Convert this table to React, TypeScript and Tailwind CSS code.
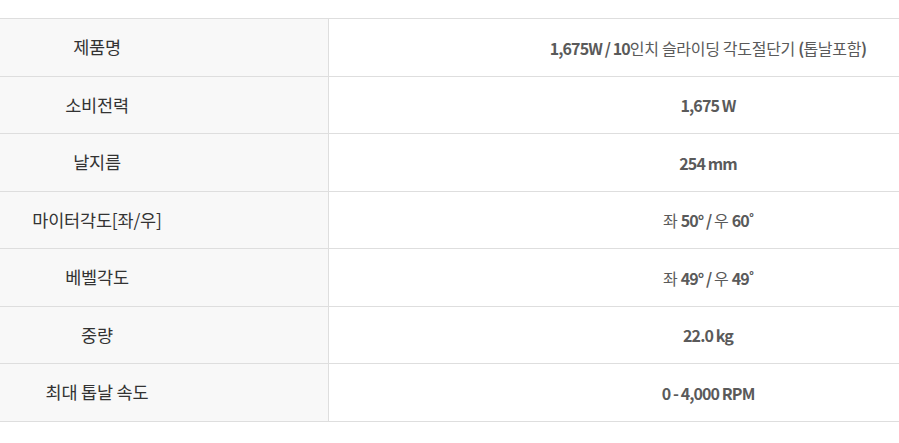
import React from "react";

const B = ({ children }: { children: React.ReactNode }) => (
  <span className="font-semibold tracking-[-0.9px]">{children}</span>
);

const rows: { k: string; v: React.ReactNode }[] = [
  {
    k: "제품명",
    v: (
      <>
        <B>1,675W / 10</B>인치 슬라이딩 각도절단기 <B>(</B>톱날포함<B>)</B>
      </>
    ),
  },
  { k: "소비전력", v: <B>1,675 W</B> },
  { k: "날지름", v: <B>254 mm</B> },
  {
    k: "마이터각도[좌/우]",
    v: (
      <>
        좌 <B>50° / </B>우 <B>60˚</B>
      </>
    ),
  },
  {
    k: "베벨각도",
    v: (
      <>
        좌 <B>49° / </B>우 <B>49˚</B>
      </>
    ),
  },
  { k: "중량", v: <B>22.0 kg</B> },
  { k: "최대 톱날 속도", v: <B>0 - 4,000 RPM</B> },
];

export default function App() {
  return (
    <div
      className="w-[899px] h-[443px] bg-white pt-[18px]"
      style={{ fontFamily: '"Noto Sans CJK KR", "Noto Sans", sans-serif' }}
    >
      <div className="border-t border-[#dedede]">
        {rows.map((r, i) => (
          <div
            key={i}
            className={`flex border-b border-[#dedede] ${i % 2 === 0 ? "h-[58px]" : "h-[57px]"}`}
          >
            <div className="w-[329px] shrink-0 bg-[#f8f8f8] border-r border-[#dedede] flex items-center">
              <div className="w-[194px] text-center text-[17.5px] text-[#333] tracking-[-0.2px]">
                {r.k}
              </div>
            </div>
            <div className="flex-1 flex items-center justify-center pl-[188px] text-[16px] text-[#5a5a5a] tracking-[-0.3px] whitespace-nowrap">
              <span>{r.v}</span>
            </div>
          </div>
        ))}
      </div>
    </div>
  );
}
